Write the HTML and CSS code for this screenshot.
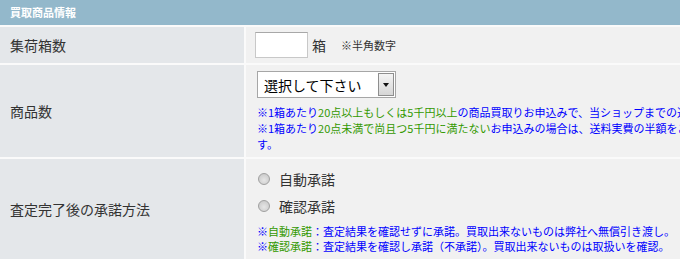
FILE: index.html
```html
<!DOCTYPE html>
<html lang="ja">
<head>
  <meta charset="UTF-8" />
  <title>買取商品情報</title>
  <link rel="stylesheet" href="styles.css">
</head>
<body>
  <div class="form">
    <div class="form-head">買取商品情報</div>

    <div class="label">集荷箱数</div>
    <div class="field field-boxes">
      <input type="text" class="num-input" />
      <span class="unit">箱</span>
      <span class="hint">※半角数字</span>
    </div>

    <div class="label">商品数</div>
    <div class="field">
      <div class="select-wrap">
        <select class="select">
          <option>選択して下さい</option>
        </select>
        <span class="select-btn"></span>
      </div>
      <p class="note">※1箱あたり<span class="green">20点以上もしくは5千円以上</span>の商品買取りお申込みで、当ショップまでの送料無料です。<br>
      ※1箱あたり<span class="green">20点未満で尚且つ5千円に満たない</span>お申込みの場合は、送料実費の半額をご負担いただきます。</p>
    </div>

    <div class="label">査定完了後の承諾方法</div>
    <div class="field">
      <label class="radio-row"><input type="radio" name="accept" class="radio" /> 自動承諾</label>
      <label class="radio-row"><input type="radio" name="accept" class="radio" /> 確認承諾</label>
      <p class="note note-tight">※<span class="green">自動承諾</span>：査定結果を確認せずに承諾。買取出来ないものは弊社へ無償引き渡し。<br>
      ※<span class="green">確認承諾</span>：査定結果を確認し承諾（不承諾）。買取出来ないものは取扱いを確認。</p>
    </div>
  </div>
</body>
</html>
```

FILE: styles.css
```css
* { box-sizing: border-box; margin: 0; padding: 0; }
body { font-family: "Noto Sans CJK JP", "Noto Sans", sans-serif; background: #fff; color: #333; overflow: hidden; }

.form {
  display: grid; grid-template-columns: 244px 535px; gap: 2px;
  width: 781px; background: #fafafa;
}
.form-head {
  grid-column: 1 / 3; height: 25px; background: #93b8cb; color: #fff;
  font-size: 11px; font-weight: bold; line-height: 25px; padding-left: 10px;
}
.label {
  background: #e4e7ea; font-size: 14px; color: #333;
  display: flex; align-items: center; padding-left: 10px;
}
.field { background: #f1f1f1; padding: 6px 10px 5px 11px; }

.field-boxes { display: flex; align-items: center; height: 36px; padding: 0 9px; }
.num-input {
  width: 53px; height: 26px; border: 1px solid #c8c8c8; border-top-color: #a8a8a8;
  background: #fff;
}
.unit { font-size: 14px; margin-left: 4px; color: #333; }
.hint { font-size: 11px; margin-left: 15px; color: #333; }

.select-wrap { position: relative; width: 139px; height: 27px; }
.select {
  appearance: none; -webkit-appearance: none; width: 139px; height: 27px;
  border: 1px solid #a6a6a6; background: #fff; font-family: inherit;
  font-size: 14px; color: #000; padding-left: 6px; border-radius: 0;
}
.select-btn {
  position: absolute; top: 2px; right: 2px; width: 16px; height: 23px;
  border: 1px solid #8e8e8e; background: linear-gradient(#f4f4f4, #d6d6d6);
}
.select-btn::after {
  content: ""; position: absolute; left: 4px; top: 9px;
  border-left: 3px solid transparent; border-right: 3px solid transparent;
  border-top: 4px solid #111;
}

.note { font-size: 11px; line-height: 16px; color: #0000ff; margin-top: 6px; }
.note-tight { line-height: 15px; margin-top: 5px; }
.green { color: #339900; }

.radio-row { display: flex; align-items: center; height: 27px; font-size: 14px; color: #333; }
.radio {
  appearance: none; -webkit-appearance: none; width: 12px; height: 12px;
  border: 1px solid #a0a0a0; border-radius: 50%; margin: 0 9px 0 1px;
  background: radial-gradient(circle at 50% 60%, #e6e6e6, #c4c4c4);
}
```
